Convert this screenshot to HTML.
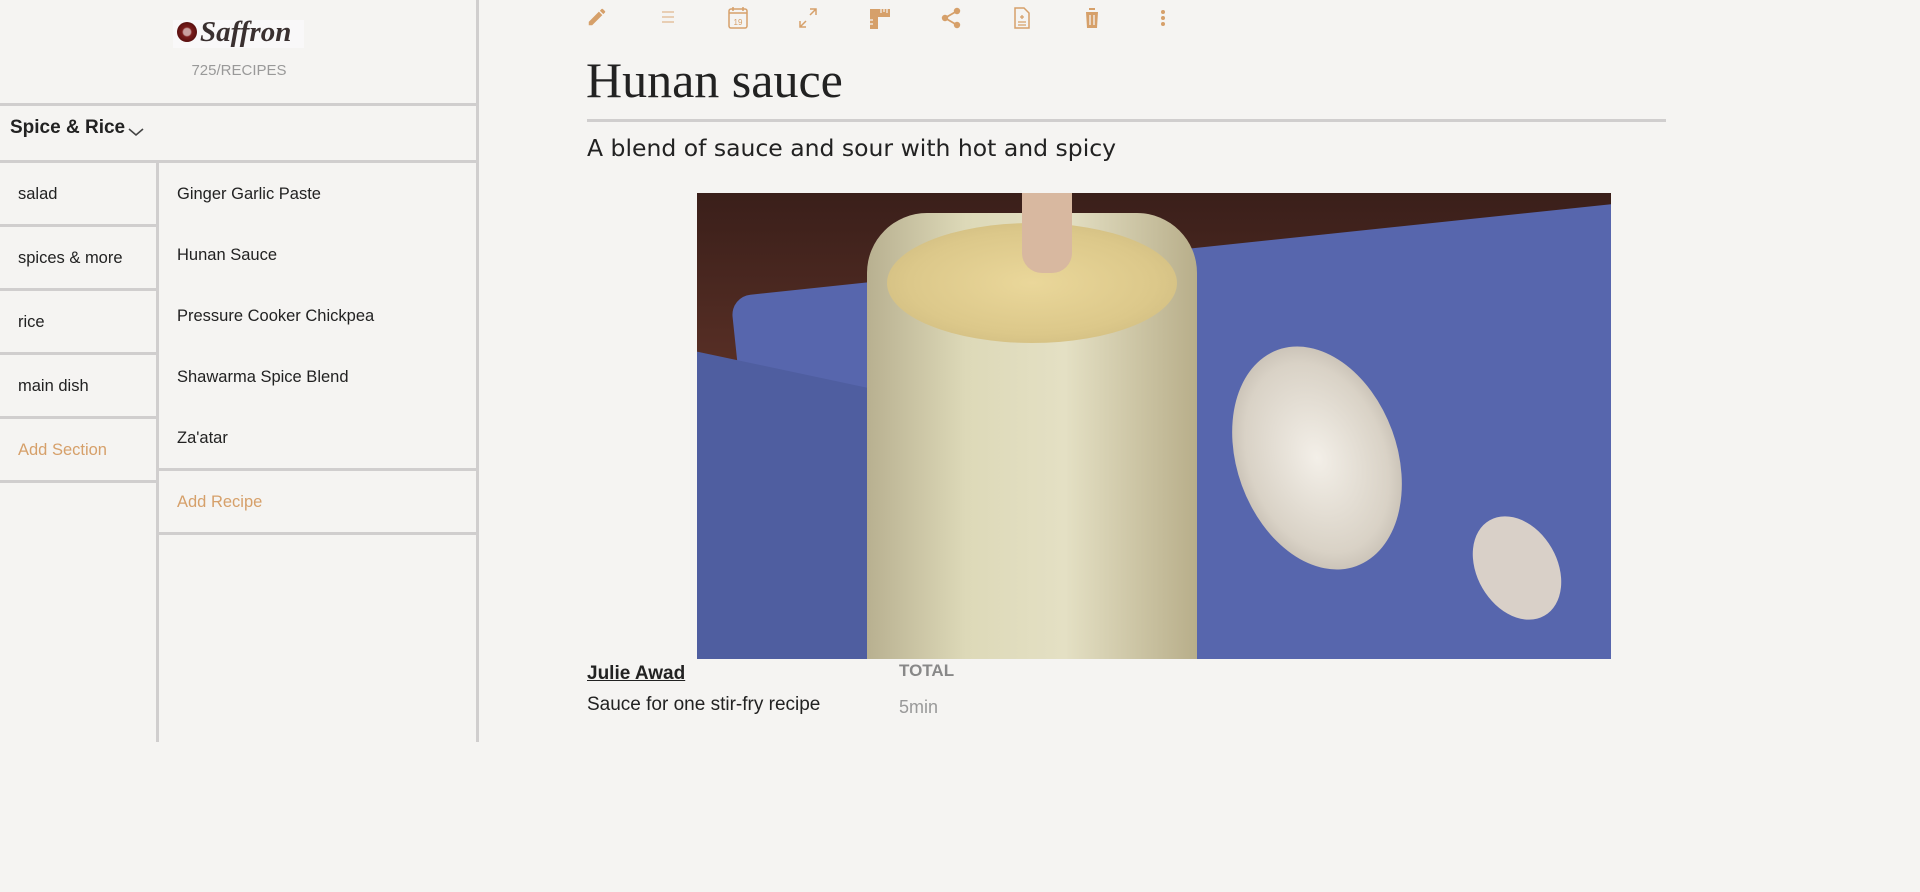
<!DOCTYPE html>
<html><head><meta charset="utf-8"><style>
*{margin:0;padding:0;box-sizing:border-box}
body{width:1920px;height:892px;background:#f5f4f2;font-family:"Liberation Sans",sans-serif;position:relative;overflow:hidden;color:#222}
.a{position:absolute}
.hl{position:absolute;background:#d0cece;height:3px}
.vl{position:absolute;background:#d0cece;width:3px}
.t{position:absolute;font-size:16.5px;color:#222;line-height:20px}
.o{color:#d6a06a}
.ic{position:absolute;top:6px}
</style></head><body>
<div class="a" style="left:173px;top:20px;width:131px;height:28px;background:#f9f8f9"></div>
<div class="a" style="left:177px;top:22px;width:20px;height:20px;border-radius:50%;background:radial-gradient(circle,#c9a0a0 0 25%,#7a1c1c 35%,#5a1010 70%,#9a5050 100%)"></div>
<div class="a" style="left:200px;top:16px;font-family:'Liberation Serif',serif;font-style:italic;font-weight:bold;font-size:29px;color:#3a3030">Saffron</div>
<div class="a" style="left:0;width:478px;top:62px;text-align:center;font-size:15px;color:#999">725/RECIPES</div>
<div class="hl" style="left:0;top:103px;width:478px"></div>
<div class="a" style="left:10px;top:117px;font-size:19px;font-weight:bold;color:#222">Spice &amp; Rice</div>
<svg class="a" style="left:128px;top:127px" width="16" height="10"><path d="M1 2l7 6 7-6" fill="none" stroke="#444" stroke-width="1.6"/></svg>
<div class="hl" style="left:0;top:160px;width:478px"></div>
<div class="vl" style="left:476px;top:0;height:742px"></div>
<div class="vl" style="left:156px;top:160px;height:582px"></div>
<div class="hl" style="left:0;top:224px;width:157px"></div>
<div class="hl" style="left:0;top:288px;width:157px"></div>
<div class="hl" style="left:0;top:352px;width:157px"></div>
<div class="hl" style="left:0;top:416px;width:157px"></div>
<div class="hl" style="left:0;top:480px;width:157px"></div>
<div class="t" style="left:18px;top:184px">salad</div>
<div class="t" style="left:18px;top:248px">spices &amp; more</div>
<div class="t" style="left:18px;top:312px">rice</div>
<div class="t" style="left:18px;top:376px">main dish</div>
<div class="t o" style="left:18px;top:440px">Add Section</div>
<div class="t" style="left:177px;top:184px">Ginger Garlic Paste</div>
<div class="t" style="left:177px;top:245px">Hunan Sauce</div>
<div class="t" style="left:177px;top:306px">Pressure Cooker Chickpea</div>
<div class="t" style="left:177px;top:367px">Shawarma Spice Blend</div>
<div class="t" style="left:177px;top:428px">Za'atar</div>
<div class="hl" style="left:157px;top:468px;width:320px"></div>
<div class="hl" style="left:157px;top:532px;width:320px"></div>
<div class="t o" style="left:177px;top:492px">Add Recipe</div>
<svg class="ic" style="left:586px" width="22" height="22" viewBox="0 0 24 24"><path d="M3 17.25V21h3.75L17.8 9.94l-3.75-3.75L3 17.25zM20.7 7.04a1 1 0 000-1.41l-2.34-2.34a1 1 0 00-1.41 0l-1.83 1.83 3.75 3.75 1.83-1.83z" fill="#d6a06a"/></svg>
<svg class="ic" style="left:658px" width="20" height="22" viewBox="0 0 20 22"><path d="M4 6h12M4 11h12M4 16h12" stroke="#e0b890" stroke-width="1.3"/></svg>
<svg class="ic" style="left:727px" width="22" height="24" viewBox="0 0 22 24"><rect x="2" y="3" width="18" height="19" rx="2" fill="none" stroke="#d6a06a" stroke-width="1.5"/><path d="M2 7h18M6 1v4M16 1v4" stroke="#d6a06a" stroke-width="1.5"/><text x="11" y="19" font-size="8" text-anchor="middle" fill="#d6a06a" font-family="Liberation Sans">19</text></svg>
<svg class="ic" style="left:797px" width="22" height="24" viewBox="0 0 22 24"><path d="M13 3h6v6M19 3l-6 6M9 21H3v-6M3 21l6-6" fill="none" stroke="#d6a06a" stroke-width="1.5"/></svg>
<svg class="ic" style="left:869px" width="22" height="24" viewBox="0 0 22 24"><path d="M1 3h20v8H9v12H1z" fill="#d6a06a"/><path d="M12 3v4M15 3v3M18 3v4M1 14h3M1 18h3" stroke="#f5f4f2" stroke-width="1.2"/></svg>
<svg class="ic" style="left:940px" width="22" height="24" viewBox="0 0 22 24"><circle cx="17" cy="5" r="3.2" fill="#d6a06a"/><circle cx="5" cy="12" r="3.2" fill="#d6a06a"/><circle cx="17" cy="19" r="3.2" fill="#d6a06a"/><path d="M17 5L5 12l12 7" fill="none" stroke="#d6a06a" stroke-width="1.8"/></svg>
<svg class="ic" style="left:1012px" width="20" height="24" viewBox="0 0 20 24"><path d="M3 2h9l5 5v15H3z" fill="none" stroke="#d6a06a" stroke-width="1.5"/><path d="M6 16h8M6 19h8M10 9v4M8 11h4" stroke="#d6a06a" stroke-width="1.3"/></svg>
<svg class="ic" style="left:1082px" width="20" height="24" viewBox="0 0 20 24"><path d="M2 4h16M7 4V2h6v2M4 6h12l-1 16H5z" fill="#d6a06a"/><path d="M8 9v10M12 9v10" stroke="#f5f4f2" stroke-width="1.3"/></svg>
<svg class="ic" style="left:1157px" width="12" height="24" viewBox="0 0 12 24"><circle cx="6" cy="6" r="2" fill="#d6a06a"/><circle cx="6" cy="12" r="2" fill="#d6a06a"/><circle cx="6" cy="18" r="2" fill="#d6a06a"/></svg>
<div class="a" style="left:586px;top:50px;font-family:'Liberation Serif',serif;font-size:50px;color:#222;line-height:60px">Hunan sauce</div>
<div class="hl" style="left:587px;top:119px;width:1079px"></div>
<div class="a" style="left:587px;top:134px;font-family:'Comic Sans MS','DejaVu Sans',sans-serif;font-size:23.5px;color:#222">A blend of sauce and sour with hot and spicy</div>
<div class="a" style="left:697px;top:193px;width:914px;height:466px;overflow:hidden;background:#4d2820">
<div class="a" style="left:0;top:0;width:914px;height:466px;background:linear-gradient(180deg,#3a1f1a 0,#5a3026 40%,#3b2a30 100%)"></div>
<div class="a" style="left:60px;top:50px;width:1000px;height:560px;background:#5766ad;transform:rotate(-6deg);border-radius:20px"></div>
<div class="a" style="left:-40px;top:190px;width:340px;height:340px;background:#4f5ea0;transform:rotate(12deg)"></div>
<div class="a" style="left:170px;top:20px;width:330px;height:470px;border-radius:60px 60px 20px 20px;background:linear-gradient(90deg,#b8b090 0,#ddd9b8 30%,#e4e0c4 60%,#b8ae8a 100%)"></div>
<div class="a" style="left:190px;top:30px;width:290px;height:120px;border-radius:50%;background:radial-gradient(ellipse,#ead79a 0,#dcc88a 60%,#c8b47a 100%)"></div>
<div class="a" style="left:325px;top:0;width:50px;height:80px;background:#d8b8a0;border-radius:0 0 20px 20px"></div>
<div class="a" style="left:540px;top:150px;width:160px;height:230px;border-radius:50%;background:radial-gradient(ellipse,#f3efe8 0,#d9d2c6 60%,#a89f95 100%);transform:rotate(-20deg)"></div>
<div class="a" style="left:780px;top:320px;width:80px;height:110px;border-radius:50%;background:#d9d0c8;transform:rotate(-30deg)"></div>
</div>
<div class="a" style="left:587px;top:663px;font-size:19px;font-weight:bold;text-decoration:underline;color:#222">Julie Awad</div>
<div class="a" style="left:587px;top:694px;font-size:19px;color:#222">Sauce for one stir-fry recipe</div>
<div class="a" style="left:899px;top:661px;font-size:17px;font-weight:bold;color:#888">TOTAL</div>
<div class="a" style="left:899px;top:697px;font-size:18px;color:#999">5min</div>
</body></html>
